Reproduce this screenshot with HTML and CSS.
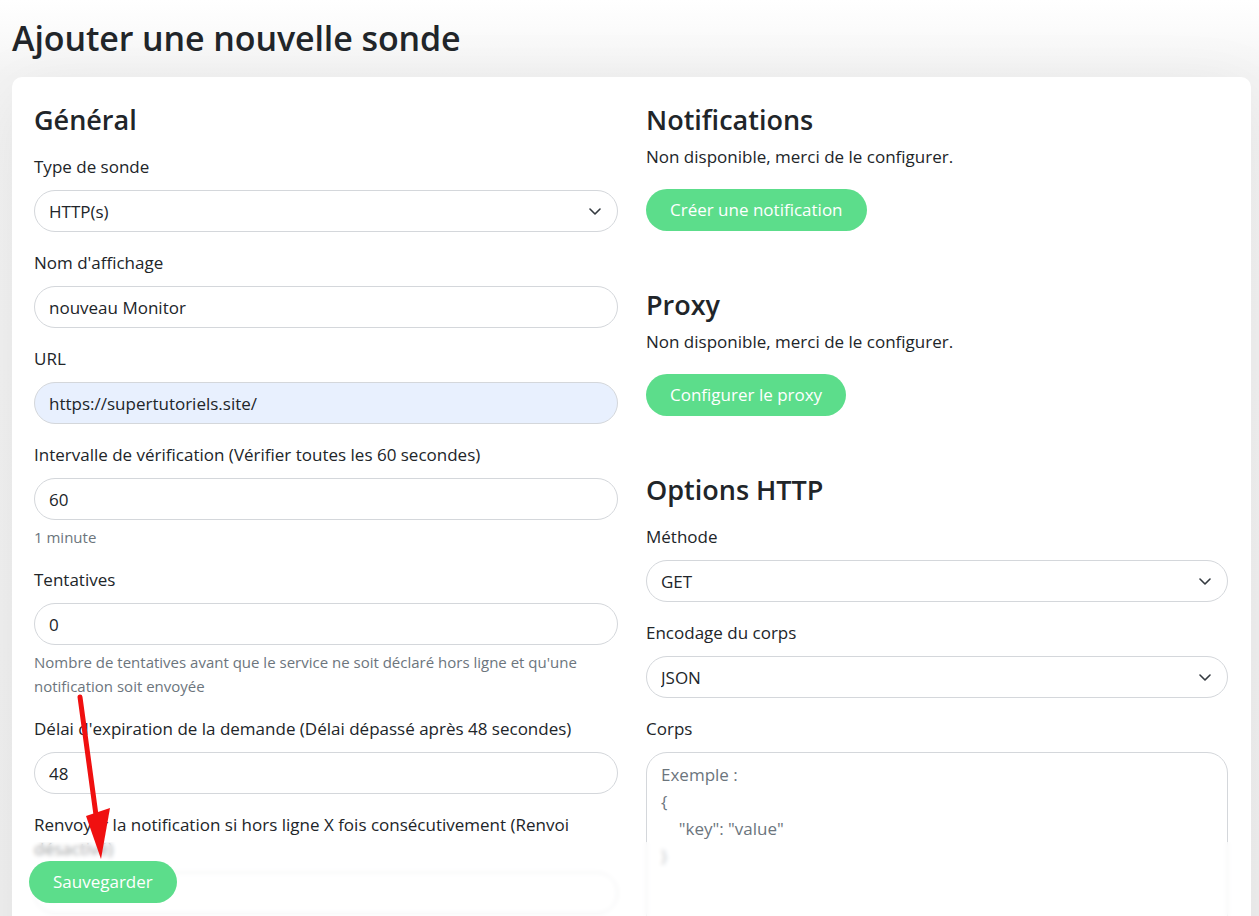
FILE: index.html
```html
<!DOCTYPE html>
<html lang="fr">
<head>
<meta charset="utf-8">
<title>Ajouter une nouvelle sonde</title>
<link rel="stylesheet" href="styles.css">
</head>
<body>
<div class="page">
  <h1 class="title">Ajouter une nouvelle sonde</h1>
  <form class="card">
    <div class="cols">
      <div class="col">
        <h2 class="sec">Général</h2>
        <div class="field">
          <label class="lbl">Type de sonde</label>
          <div class="sel-wrap">
            <select class="ctl"><option>HTTP(s)</option></select>
            <svg class="chev" viewBox="0 0 12 7" width="12" height="7"><path d="M1 1l5 5 5-5" fill="none" stroke="#343a40" stroke-width="1.6" stroke-linecap="round" stroke-linejoin="round"/></svg>
          </div>
        </div>
        <div class="field">
          <label class="lbl">Nom d'affichage</label>
          <input class="ctl" type="text" value="nouveau Monitor">
        </div>
        <div class="field">
          <label class="lbl">URL</label>
          <input class="ctl ctl-fill" type="text" value="https://supertutoriels.site/">
        </div>
        <div class="field">
          <label class="lbl">Intervalle de vérification (Vérifier toutes les 60 secondes)</label>
          <input class="ctl" type="text" value="60">
          <div class="help">1 minute</div>
        </div>
        <div class="field">
          <label class="lbl">Tentatives</label>
          <input class="ctl" type="text" value="0">
          <div class="help">Nombre de tentatives avant que le service ne soit déclaré hors ligne et qu'une notification soit envoyée</div>
        </div>
        <div class="field">
          <label class="lbl">Délai d'expiration de la demande (Délai dépassé après 48 secondes)</label>
          <input class="ctl" type="text" value="48">
        </div>
        <div class="field">
          <label class="lbl">Renvoyer la notification si hors ligne X fois consécutivement (Renvoi désactivé)</label>
          <input class="ctl" type="text" value="0">
        </div>
      </div>
      <div class="col">
        <h2 class="sec">Notifications</h2>
        <p class="note">Non disponible, merci de le configurer.</p>
        <button type="button" class="btn">Créer une notification</button>

        <h2 class="sec sec-gap">Proxy</h2>
        <p class="note">Non disponible, merci de le configurer.</p>
        <button type="button" class="btn">Configurer le proxy</button>

        <h2 class="sec sec-gap">Options HTTP</h2>
        <div class="field">
          <label class="lbl">Méthode</label>
          <div class="sel-wrap">
            <select class="ctl"><option>GET</option></select>
            <svg class="chev" viewBox="0 0 12 7" width="12" height="7"><path d="M1 1l5 5 5-5" fill="none" stroke="#343a40" stroke-width="1.6" stroke-linecap="round" stroke-linejoin="round"/></svg>
          </div>
        </div>
        <div class="field">
          <label class="lbl">Encodage du corps</label>
          <div class="sel-wrap">
            <select class="ctl"><option>JSON</option></select>
            <svg class="chev" viewBox="0 0 12 7" width="12" height="7"><path d="M1 1l5 5 5-5" fill="none" stroke="#343a40" stroke-width="1.6" stroke-linecap="round" stroke-linejoin="round"/></svg>
          </div>
        </div>
        <div class="field">
          <label class="lbl">Corps</label>
          <textarea class="ctl area" placeholder="Exemple :&#10;{&#10;    &quot;key&quot;: &quot;value&quot;&#10;}"></textarea>
        </div>
      </div>
    </div>
    <div class="bottom-bar">
      <button type="submit" class="btn">Sauvegarder</button>
    </div>
  </form>
  <svg class="arrow" width="1259" height="916" viewBox="0 0 1259 916">
    <line x1="80" y1="697" x2="96" y2="815" stroke="#f01010" stroke-width="5" stroke-linecap="round"/>
    <polygon points="86,816 110,808 101,859" fill="#f01010"/>
  </svg>
</div>
</body>
</html>
```

FILE: styles.css
```css
* { box-sizing: border-box; }

html, body {
  margin: 0;
  padding: 0;
}

body {
  font-family: "Open Sans", "Noto Sans", sans-serif;
  font-size: 17px;
  color: #212529;
  background: #f2f2f2;
}

.page {
  position: relative;
  height: 100vh;
  overflow: hidden;
  padding: 18px 8px 0 12px;
  background: linear-gradient(to bottom, #ffffff 0px, #fbfbfb 30px, #f4f4f4 76px, #f1f1f1 100%);
}

.title {
  margin: 0 0 18px;
  font-size: 34px;
  line-height: 41px;
  font-weight: 600;
  letter-spacing: -0.1px;
}

.card {
  background: #ffffff;
  border-radius: 10px;
  box-shadow: 0 15px 70px rgba(0, 0, 0, 0.08);
  padding: 26px 23px 40px 22px;
}

.cols {
  display: grid;
  grid-template-columns: 584px 1fr;
  column-gap: 28px;
}

.sec {
  margin: 0 0 8px;
  font-size: 27px;
  line-height: 34px;
  font-weight: 600;
}

.sec-gap { margin-top: 57px; }

.sec + .field { margin-top: 18px; }

.note {
  margin: 0 0 20px;
  line-height: 24px;
}

.field {
  margin-bottom: 19px;
}

.lbl {
  display: block;
  line-height: 24px;
  margin-bottom: 11px;
}

.ctl {
  display: block;
  width: 100%;
  height: 42px;
  padding: 0 14px;
  border: 1px solid #d4d7db;
  border-radius: 21px;
  background: #ffffff;
  font-family: inherit;
  font-size: 17px;
  color: #212529;
  outline: none;
  appearance: none;
  -webkit-appearance: none;
}

.ctl-fill { background: #e8f0fe; }

.sel-wrap { position: relative; }

.chev {
  position: absolute;
  right: 17px;
  top: 18px;
}

.help {
  margin-top: 5px;
  font-size: 15px;
  line-height: 24px;
  color: #6c757d;
}

.area {
  height: 220px;
  padding: 8px 14px;
  line-height: 27px;
  resize: none;
}

.area::placeholder {
  color: #6c757d;
  opacity: 1;
}

.btn {
  display: inline-block;
  height: 42px;
  padding: 0 24px;
  border: none;
  border-radius: 21px;
  background: #5cdd8b;
  color: #ffffff;
  font-family: inherit;
  font-size: 17px;
  line-height: 42px;
  cursor: pointer;
}

.bottom-bar {
  position: sticky;
  bottom: 0;
  z-index: 100;
  margin: 0 -23px -40px -22px;
  padding: 19px 16px 13px 17px;
  background: rgba(255, 255, 255, 0.55);
  backdrop-filter: blur(2px);
  -webkit-backdrop-filter: blur(2px);
  border-radius: 0 0 10px 10px;
}

.arrow {
  position: absolute;
  left: 0;
  top: 0;
  z-index: 200;
  pointer-events: none;
}
```
